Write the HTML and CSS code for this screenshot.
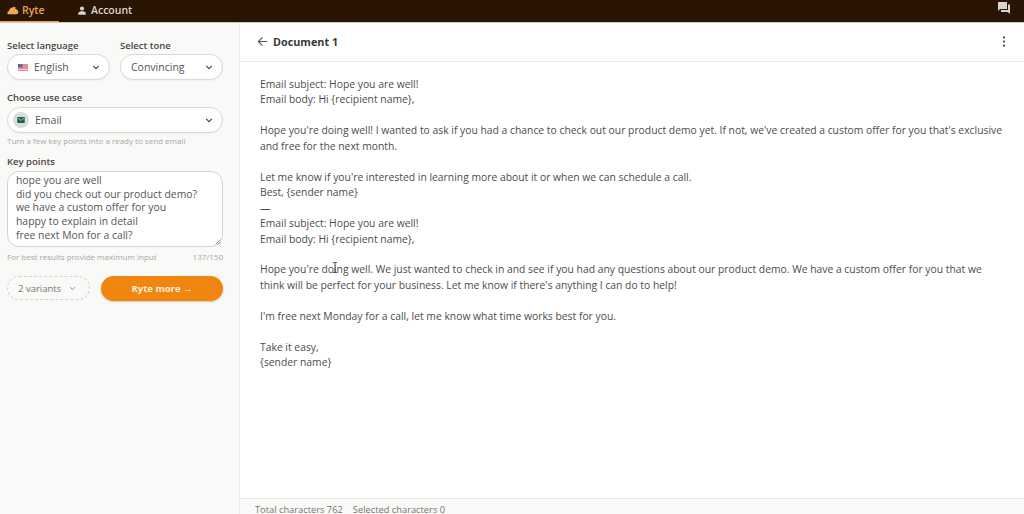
FILE: index.html
```html
<!DOCTYPE html>
<html lang="en">
<head>
<meta charset="utf-8">
<title>Ryte</title>
<link rel="stylesheet" href="styles.css">
</head>
<body>
<nav class="topbar">
  <a class="tab tab-active">
    <svg class="tab-icon" viewBox="0 0 16 12"><path fill="#f0a855" d="M1 11c-1-2-.5-4 1.500-4.500C3.500 4 5 2 7 2c1 0 1.500-1 3-1s1.500 1.500 1 2.500c2 .5 4 2 4 4.500 0 2-1 3-2.500 3z"/></svg>
    <span>Ryte</span>
  </a>
  <a class="tab">
    <svg class="tab-icon" viewBox="0 0 12 12"><circle cx="6" cy="3.200" r="2.700" fill="#d8d4ce"/><path fill="#d8d4ce" d="M1 11.500V9.500C1 7.800 4 7 6 7s5 .8 5 2.500v2z"/></svg>
    <span>Account</span>
  </a>
  <svg class="chat-icon" viewBox="0 0 14 13"><path fill="#d8d4ce" d="M1 0h9v7H3L1 9z"/><path fill="#d8d4ce" d="M11 2.500h2V12l-2.200-2H4V8h7z"/></svg>
</nav>
<div class="app">
  <aside class="sidebar">
    <div class="row">
      <div class="field">
        <label class="label">Select language</label>
        <div class="select">
          <svg class="flag" viewBox="0 0 10 7"><rect width="10" height="7" fill="#e58a96"/><rect width="4.500" height="3.500" fill="#5a6f96"/><rect y="5" x="0" width="10" height="1" fill="#f2c9cf"/></svg>
          <span class="select-text">English</span>
          <svg class="chev" viewBox="0 0 10 6"><path d="M1.500 1 5 4.500 8.500 1" fill="none" stroke="#444" stroke-width="1.400"/></svg>
        </div>
      </div>
      <div class="field">
        <label class="label">Select tone</label>
        <div class="select select-plain">
          <span class="select-text">Convincing</span>
          <svg class="chev" viewBox="0 0 10 6"><path d="M1.500 1 5 4.500 8.500 1" fill="none" stroke="#444" stroke-width="1.400"/></svg>
        </div>
      </div>
    </div>
    <label class="label label-case">Choose use case</label>
    <div class="select select-case">
      <span class="case-badge"><svg viewBox="0 0 10 8"><rect width="10" height="8" rx="1" fill="#1f6458"/><path d="M1 1.500 5 4.500 9 1.500" fill="none" stroke="#cfe3dd" stroke-width=".9"/></svg></span>
      <span class="select-text">Email</span>
      <svg class="chev" viewBox="0 0 10 6"><path d="M1.500 1 5 4.500 8.500 1" fill="none" stroke="#444" stroke-width="1.400"/></svg>
    </div>
    <p class="hint">Turn a few key points into a ready to send email</p>
    <label class="label label-key">Key points</label>
    <div class="textarea">hope you are well
did you check out our product demo?
we have a custom offer for you
happy to explain in detail
free next Mon for a call?<svg class="grip" viewBox="0 0 6 6"><path d="M5.500 .5 .5 5.500M5.500 3 3 5.500" stroke="#777" stroke-width=".8"/></svg></div>
    <div class="hint hint-row"><span>For best results provide maximum input</span><span>137/150</span></div>
    <div class="actions">
      <div class="variants"><span>2 variants</span><svg class="chev chev-light" viewBox="0 0 10 6"><path d="M1.500 1 5 4.500 8.500 1" fill="none" stroke="#777" stroke-width="1.200"/></svg></div>
      <button class="ryte-btn">Ryte more <span class="arrow">→</span></button>
    </div>
  </aside>
  <main class="main">
    <header class="doc-head">
      <svg class="back" viewBox="0 0 12 12"><path d="M11 6H1.500M6 1.500 1.500 6 6 10.500" fill="none" stroke="#555" stroke-width="1.200"/></svg>
      <h1 class="doc-title">Document 1</h1>
      <svg class="dots" viewBox="0 0 4 12"><circle cx="2" cy="1.500" r="1.200"/><circle cx="2" cy="6" r="1.200"/><circle cx="2" cy="10.500" r="1.200"/></svg>
    </header>
    <div class="doc-body">Email subject: Hope you are well!
Email body: Hi {recipient name},

Hope you're doing well! I wanted to ask if you had a chance to check out our product demo yet. If not, we've created a custom offer for you that's exclusive and free for the next month.

Let me know if you're interested in learning more about it or when we can schedule a call.
Best, {sender name}
—
Email subject: Hope you are well!
Email body: Hi {recipient name},

Hope you're doing well. We just wanted to check in and see if you had any questions about our product demo. We have a custom offer for you that we think will be perfect for your business. Let me know if there's anything I can do to help!

I'm free next Monday for a call, let me know what time works best for you.

Take it easy,
{sender name}</div>
    <footer class="doc-foot"><span>Total characters 762</span><span>Selected characters 0</span></footer>
    <svg class="ibeam" viewBox="0 0 6 11"><path d="M1 .5h4M3 .5v10M1 10.500h4" fill="none" stroke="#333" stroke-width=".8"/></svg>
  </main>
</div>
</body>
</html>
```
FILE: styles.css
```css
* { box-sizing: border-box; }
html, body { margin: 0; height: 100%; overflow: hidden; }
body { font-family: "Open Sans", "Noto Sans", sans-serif; color: #4a4644; background: #fff; display: flex; flex-direction: column; }

.topbar { height: 23px; flex: none; background: #2a1404; border-bottom: 1px solid #cfc9c0; display: flex; align-items: stretch; position: relative; }
.tab { width: 59px; display: flex; align-items: center; gap: 3px; padding: 0 0 2px 7px; font-size: 10.500px; font-weight: 600; color: #d8d4ce; }
.tab + .tab { padding-left: 17px; gap: 3px; width: auto; }
.tab-active { color: #e9a351; box-shadow: inset 0 -1px 0 #f0a855; }
.tab-icon { width: 12px; height: 9px; }
.chat-icon { width: 14px; height: 13px; margin: 2px 13px 0 auto; }

.app { flex: 1; display: flex; min-height: 0; }
.sidebar { width: 240px; flex: none; background: #f9f9f8; border-right: 1px solid #ecebe9; padding: 16px 16px 0 7px; }
.row { display: flex; gap: 10px; }
.field { width: 103px; }
.label { display: block; font-size: 9.500px; font-weight: 600; line-height: 13px; color: #4a4644; }
.select { height: 26px; margin-top: 2px; background: #fff; border: 1px solid #dbd9d5; border-radius: 13px; display: flex; align-items: center; padding: 0 9px 0 10px; font-size: 10.500px; color: #555; box-shadow: 0 1px 1px rgba(0,0,0,.04); }
.select-plain { padding-left: 10px; }
.flag { width: 10px; height: 7px; margin-right: 6px; }
.select-text { flex: 1; }
.chev { width: 8px; height: 5px; flex: none; }
.label-case { margin-top: 11px; }
.select-case { margin-top: 3px; padding-left: 5px; }
.case-badge { width: 16px; height: 16px; border-radius: 50%; background: #dcdcd8; display: flex; align-items: center; justify-content: center; margin-right: 6px; }
.case-badge svg { width: 8px; height: 6px; }
.hint { margin: 2px 0 0; font-size: 8px; line-height: 12px; color: #a9a7a3; }
.label-key { margin-top: 8px; }
.textarea { position: relative; height: 76px; margin-top: 3px; background: #fff; border: 1px solid #d6d4d0; border-radius: 12px; padding: 2px 8px; font-size: 10.400px; line-height: 13.700px; color: #555; white-space: pre; }
.grip { position: absolute; right: 1px; bottom: 1px; width: 6px; height: 6px; }
.hint-row { display: flex; justify-content: space-between; margin-top: 4px; }
.actions { display: flex; gap: 11px; margin-top: 13px; }
.variants { width: 83px; height: 24px; border: 1px dashed #d4d2ce; border-radius: 12px; display: flex; align-items: center; justify-content: space-between; padding: 0 13px 0 10px; font-size: 9.500px; color: #77746f; }
.chev-light { width: 7px; }
.ryte-btn { flex: 1; height: 25px; border: 0; border-radius: 13px; background: #f0860f; color: #fdeedd; font: 700 9.500px "Open Sans", sans-serif; box-shadow: 0 1px 2px rgba(0,0,0,.2); }
.arrow { font-weight: 400; }

.main { flex: 1; min-width: 0; display: flex; flex-direction: column; position: relative; background: #fff; }
.doc-head { height: 39px; flex: none; border-bottom: 1px solid #ececea; display: flex; align-items: center; padding: 0 18px 1px 17px; }
.back { width: 11px; height: 11px; margin-right: 5px; }
.doc-title { flex: 1; margin: 0; font-size: 10.800px; font-weight: 700; color: #3c3835; }
.dots { width: 4px; height: 11px; fill: #4a4644; }
.doc-body { flex: 1; padding: 15px 20px 0 20px; font-size: 10.350px; line-height: 15.450px; color: #4f4b48; white-space: pre-wrap; }
.doc-foot { height: 16px; flex: none; border-top: 1px solid #e9e8e5; background: #f9f9f8; display: flex; gap: 10px; padding: 5px 0 0 15px; font-size: 9.300px; line-height: 12px; color: #77746f; }
.ibeam { position: absolute; left: 92px; top: 239px; width: 6px; height: 11px; }
```
